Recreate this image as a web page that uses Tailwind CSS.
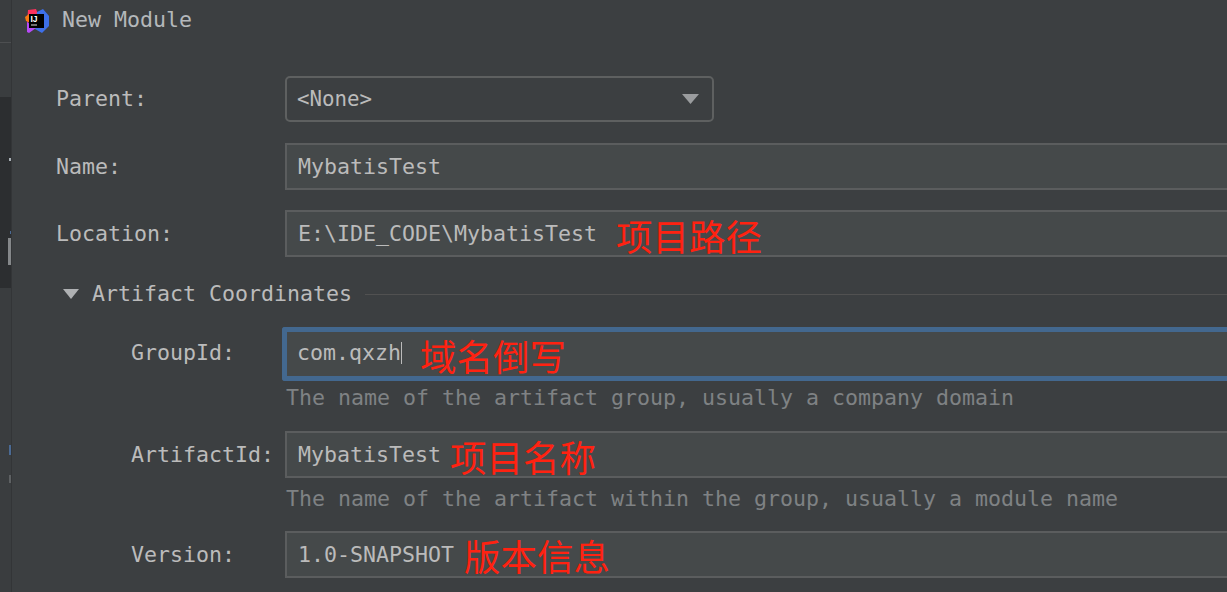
<!DOCTYPE html>
<html lang="en">
<head>
    <meta charset="UTF-8">
    <title>New Module</title>
    <script src="https://cdn.jsdelivr.net/npm/@tailwindcss/browser@4"></script>
</head>
<body class="bg-[#3c3f41] overflow-hidden">
    <div class="w-[1227px] h-[592px] flex overflow-hidden font-['DejaVu_Sans_Mono','Noto_Sans_CJK_SC',monospace] text-[21.6px] leading-none text-[#bbbbbb]">
        <!-- editor showing behind the dialog -->
        <div class="relative w-[11px] shrink-0 flex flex-col">
            <div class="h-[43px] bg-[#3a3d3f] border-b border-[#4d4f51]"></div>
            <div class="h-[54px] bg-[#3a3d3f]"></div>
            <div class="h-[191px] bg-[#2c2e30]"></div>
            <div class="flex-1 bg-[#3a3d3f]"></div>
            <div class="absolute left-[9px] top-[158px] w-[2px] h-[3px] bg-[#a9b0b6]"></div>
            <div class="absolute left-[10px] top-[231px] w-px h-[3px] bg-[#4a6a94]"></div>
            <div class="absolute left-[8px] top-[238px] w-[3px] h-[27px] bg-[#85888a]"></div>
            <div class="absolute left-[9px] top-[445px] w-[2px] h-[10px] bg-[#4a6a94]"></div>
            <div class="absolute left-[9px] top-[475px] w-[2px] h-[8px] bg-[#5e6163]"></div>
        </div>

        <div class="flex-1 min-w-0 border-l border-[#333537] bg-[#3c3f41]">
            <!-- title bar -->
            <div class="h-[40px] pl-[13px] flex items-center gap-[13px]">
                <svg class="w-[24px] h-[24px] mt-[2px]" viewBox="0 0 24 24">
                    <path d="M3 1 11 0 14 8 2 14Z" fill="#fe315d"/>
                    <path d="M12 3 18 0 24 7 24 17 17 24 10 20Z" fill="#3d6fe8"/>
                    <path d="M2 13 11 19 4 24 2 23Z" fill="#b74af7"/>
                    <path d="M0 8 4 5 4 13 1 12Z" fill="#f97a12"/>
                    <rect x="4" y="5" width="15" height="14" fill="#000"/>
                    <rect x="6" y="15.500" width="6" height="1" fill="#ddd"/>
                    <text x="5.500" y="12.500" font-size="8.500" font-weight="700" fill="#fff" font-family="Liberation Sans">IJ</text>
                </svg>
                <span class="text-[#b4b8bb]">New Module</span>
            </div>

            <div class="pl-[44px] pt-[36px] flex flex-col">
                <!-- parent -->
                <div class="flex items-center h-[46px]">
                    <span class="w-[229px]">Parent:</span>
                    <div class="w-[429px] h-[46px] rounded-[5px] border-2 border-[#5e6060] flex items-center justify-between pl-[10px] pr-[13px]">
                        <span class="text-[20.8px]">&lt;None&gt;</span>
                        <svg class="w-[17px] h-[10px]" viewBox="0 0 17 10"><path d="M0 0H17L8.500 10Z" fill="#9a9c9e"/></svg>
                    </div>
                </div>
                <!-- name -->
                <div class="flex items-center h-[47px] mt-[21px]">
                    <span class="w-[229px]">Name:</span>
                    <div class="flex-1 h-[47px] border-2 border-r-0 border-[#5b5d5e] bg-[#45494a] flex items-center pl-[11px]">MybatisTest</div>
                </div>
                <!-- location -->
                <div class="flex items-center h-[47px] mt-[20px]">
                    <span class="w-[229px]">Location:</span>
                    <div class="flex-1 h-[47px] border-2 border-r-0 border-[#5b5d5e] bg-[#45494a] flex items-center pl-[11px]">
                        <span>E:\IDE_CODE\MybatisTest</span>
                        <span class="ml-[19px] mt-[12px] text-[36.5px] text-[#ff2211]">项目路径</span>
                    </div>
                </div>
                <!-- artifact coordinates -->
                <div class="flex items-center h-[24px] mt-[25px]">
                    <svg class="ml-[7px] w-[16px] h-[10px]" viewBox="0 0 16 10"><path d="M0 0H16L8 10Z" fill="#afb1b3"/></svg>
                    <span class="ml-[13px]">Artifact Coordinates</span>
                    <div class="flex-1 h-px bg-[#515151] ml-[13px]"></div>
                </div>

                <div class="pl-[75px] flex flex-col">
                    <!-- group id -->
                    <div class="flex items-center h-[54px] mt-[21px]">
                        <span class="w-[151px] pb-[2px]">GroupId:</span>
                        <div class="flex-1 h-[54px] rounded-l-[3px] border-[5px] border-r-0 border-[#43688f] bg-[#45494a] flex items-center pl-[10px]">
                            <span class="border-r border-[#bbbbbb] mb-[2px]">com.qxzh</span>
                            <span class="ml-[18px] mt-[10px] text-[36.5px] text-[#ff2211]">域名倒写</span>
                        </div>
                    </div>
                    <div class="ml-[155px] mt-[6px] h-[22px] text-[#7f8284] flex items-center whitespace-nowrap">The name of the artifact group, usually a company domain</div>
                    <!-- artifact id -->
                    <div class="flex items-center h-[47px] mt-[22px]">
                        <span class="w-[154px]">ArtifactId:</span>
                        <div class="flex-1 h-[47px] border-2 border-r-0 border-[#5b5d5e] bg-[#45494a] flex items-center pl-[11px]">
                            <span>MybatisTest</span>
                            <span class="ml-[9px] mt-[12px] text-[36.5px] text-[#ff2211]">项目名称</span>
                        </div>
                    </div>
                    <div class="ml-[155px] mt-[10px] h-[22px] text-[#7f8284] flex items-center whitespace-nowrap">The name of the artifact within the group, usually a module name</div>
                    <!-- version -->
                    <div class="flex items-center h-[47px] mt-[21px]">
                        <span class="w-[154px]">Version:</span>
                        <div class="flex-1 h-[47px] border-2 border-r-0 border-[#5b5d5e] bg-[#45494a] flex items-center pl-[11px]">
                            <span>1.0-SNAPSHOT</span>
                            <span class="ml-[10px] mt-[10px] text-[36.5px] text-[#ff2211]">版本信息</span>
                        </div>
                    </div>
                </div>
            </div>
        </div>
    </div>
</body>
</html>
